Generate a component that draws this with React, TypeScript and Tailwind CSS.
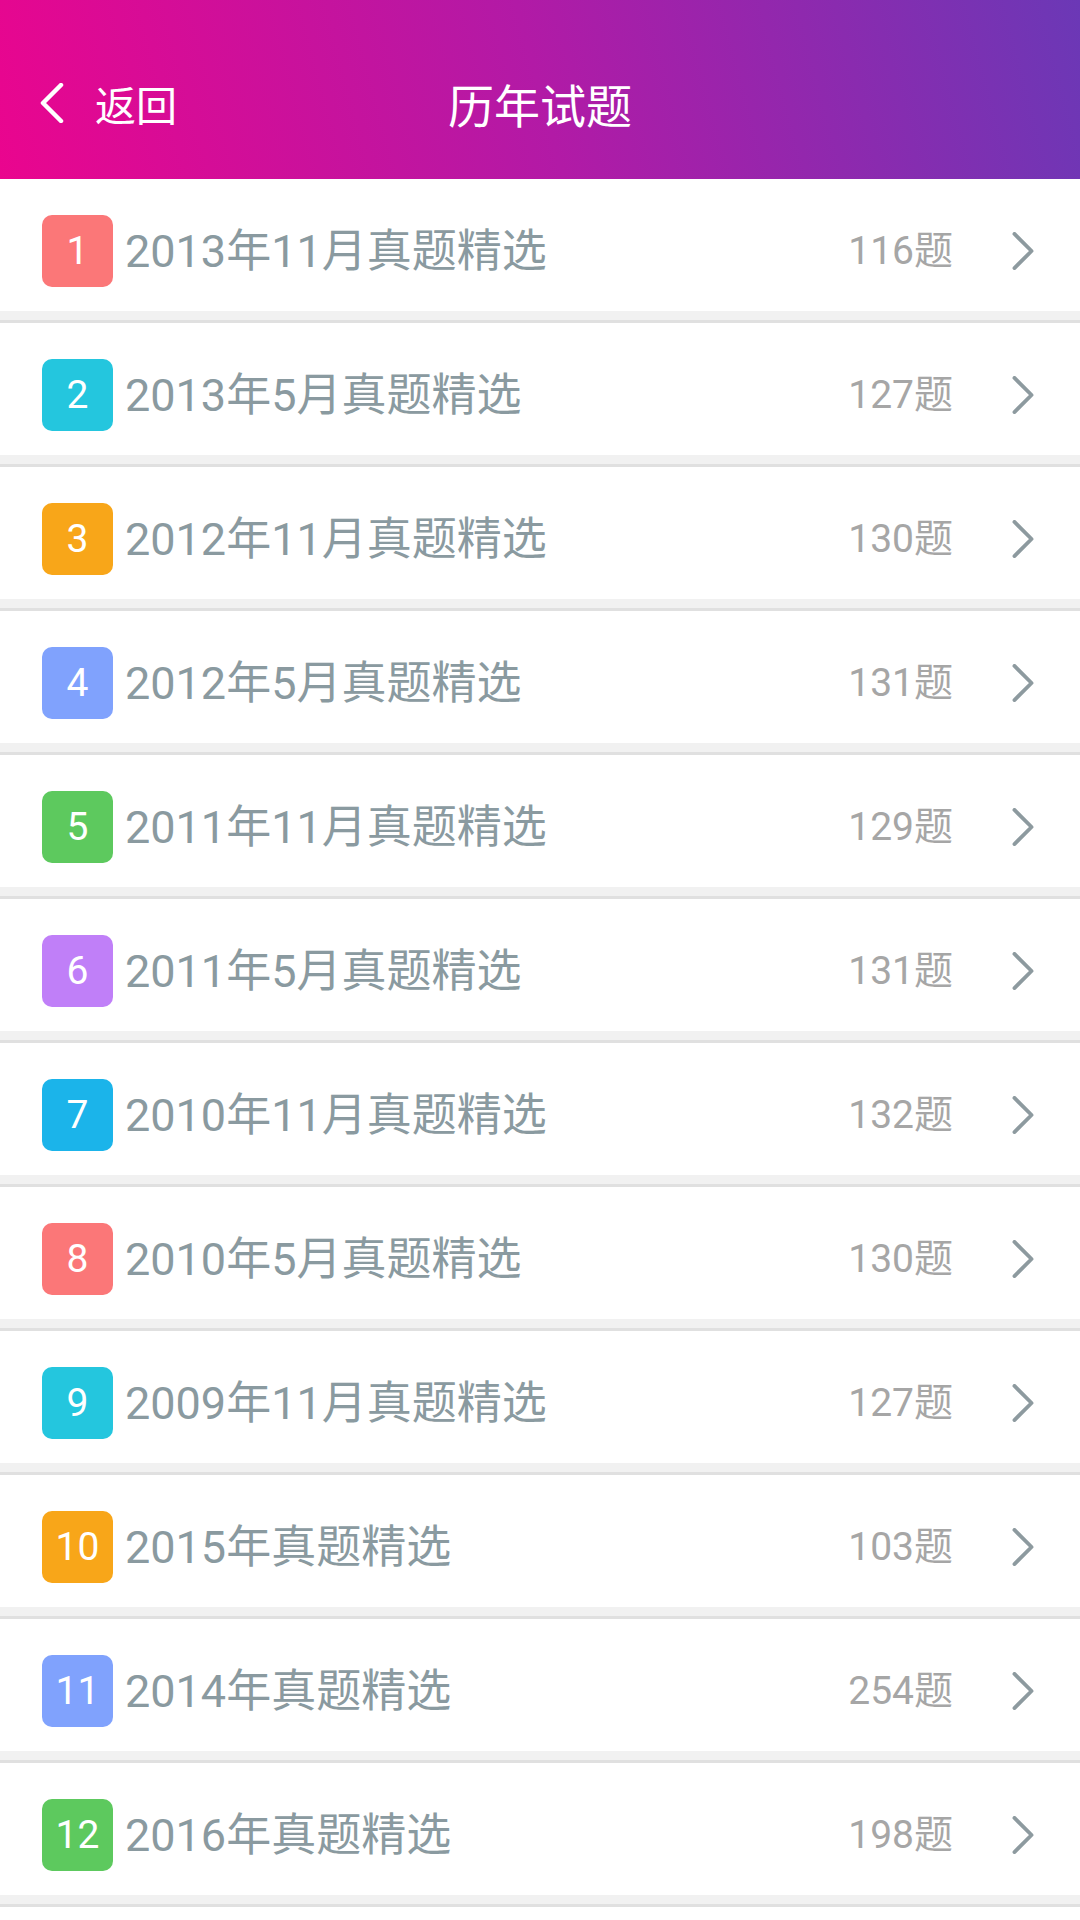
import React from "react";

const items = [
  { title: "2013年11月真题精选", count: 116, color: "bg-[#fb7778]" },
  { title: "2013年5月真题精选", count: 127, color: "bg-[#24c6de]" },
  { title: "2012年11月真题精选", count: 130, color: "bg-[#f8a619]" },
  { title: "2012年5月真题精选", count: 131, color: "bg-[#80a2fd]" },
  { title: "2011年11月真题精选", count: 129, color: "bg-[#5dc95e]" },
  { title: "2011年5月真题精选", count: 131, color: "bg-[#c07ff8]" },
  { title: "2010年11月真题精选", count: 132, color: "bg-[#1bb4ea]" },
  { title: "2010年5月真题精选", count: 130, color: "bg-[#fb7778]" },
  { title: "2009年11月真题精选", count: 127, color: "bg-[#24c6de]" },
  { title: "2015年真题精选", count: 103, color: "bg-[#f8a619]" },
  { title: "2014年真题精选", count: 254, color: "bg-[#80a2fd]" },
  { title: "2016年真题精选", count: 198, color: "bg-[#5dc95e]" },
];

function Chevron({ dir, className }: { dir: "left" | "right"; className: string }) {
  return (
    <svg viewBox="0 0 24 40" className={className} fill="none">
      {dir === "left" ? (
        <path d="M21 2 L3 20 L21 38" stroke="currentColor" strokeWidth="4.5" strokeLinecap="round" strokeLinejoin="round" />
      ) : (
        <path d="M3 2 L21 20 L3 38" stroke="currentColor" strokeWidth="4" strokeLinecap="round" strokeLinejoin="round" />
      )}
    </svg>
  );
}

function App() {
  return (
    <div className="w-[1080px] min-h-[1920px] bg-white font-['Roboto','Noto_Sans_CJK_SC',sans-serif]">
      {/* header */}
      <div className="h-[179px] pt-[58px] bg-linear-[75deg] from-[#ea058e] via-[#b21aa6] to-[#6b38b6]">
        <div className="h-[90px] relative flex items-center justify-center">
          <div className="absolute left-[40px] top-0 h-full flex items-center text-white">
            <Chevron dir="left" className="w-[24px] h-[40px]" />
            <span className="ml-[31px] text-[41px] leading-none font-['Noto_Sans_CJK_SC',sans-serif]">返回</span>
          </div>
          <span className="text-white text-[46px] leading-none font-['Noto_Sans_CJK_SC',sans-serif]">历年试题</span>
        </div>
      </div>

      {/* list */}
      <div className="flex flex-col">
        {items.map((item, i) => (
          <div key={i}>
            <div className="h-[132px] pt-[36px] pb-[24px] pl-[42px] pr-[45px] flex items-center">
              <div className={`w-[71px] h-[72px] rounded-[10px] ${item.color} flex items-center justify-center text-white text-[39px] leading-none`}>
                {i + 1}
              </div>
              <span className="ml-[12px] text-[45px] leading-none text-[#8a9aa0]">{item.title}</span>
              <span className="ml-auto text-[39px] leading-none text-[#a6a6a6]">{item.count}题</span>
              <Chevron dir="right" className="ml-[58px] w-[24px] h-[38px] text-[#8d9a9f]" />
            </div>
            <div className="h-[12px] bg-[#f1f1f1] border-b-[3px] border-[#e0e0e0]" />
          </div>
        ))}
      </div>
    </div>
  );
}

export default App;
